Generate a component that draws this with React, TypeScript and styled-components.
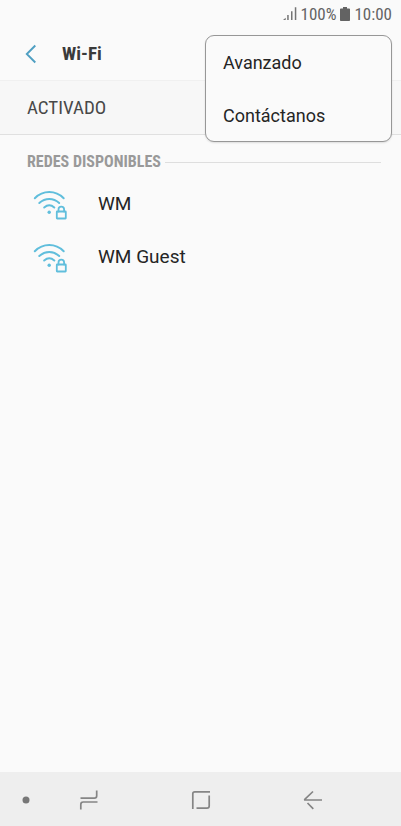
import React from "react";
import styled, { createGlobalStyle } from "styled-components";

const condensed = `"Roboto Condensed", Roboto, "Liberation Sans Narrow", sans-serif`;

const GlobalStyle = createGlobalStyle`
  * { box-sizing: border-box; }
  body { margin: 0; background: #fafafa; font-family: Roboto, sans-serif; color: #252525; }
  button { border: 0; padding: 0; background: none; font: inherit; color: inherit; text-align: left; cursor: pointer; }
  svg { display: block; flex: none; }
`;

const Screen = styled.div`
  position: relative;
  display: flex;
  flex-direction: column;
  min-height: 100vh;
`;

const StatusBar = styled.div`
  display: flex;
  align-items: center;
  justify-content: flex-end;
  gap: 4px;
  height: 28px;
  padding-right: 9px;
  font: 400 17px/28px ${condensed};
  color: #636363;
`;

const Header = styled.header`
  display: flex;
  align-items: center;
  gap: 25px;
  height: 52px;
  padding-left: 25px;
`;

const Title = styled.h1`
  margin: 0;
  font: 700 19px/24px ${condensed};
  color: #3a3a3a;
`;

const StateButton = styled.button`
  display: block;
  width: 100%;
  height: 55px;
  && {
    padding-left: 27px;
    border-top: 1px solid #f0f0f0;
    border-bottom: 1px solid #e0e0e0;
    background: #f7f7f7;
    font: 400 19px/24px ${condensed};
    color: #484848;
  }
`;

const Networks = styled.main`
  flex: 1;
  padding-top: 16px;
`;

const SectionHeading = styled.h2`
  display: flex;
  align-items: center;
  gap: 4px;
  margin: 0;
  padding: 0 20px 0 27px;
  font: 700 16px/22px ${condensed};
  color: #999;

  &::after {
    content: "";
    flex: 1;
    height: 1px;
    background: #dedede;
  }
`;

const NetworkList = styled.ul`
  list-style: none;
  margin: 0;
  padding: 6px 0 0;
`;

const NetworkButton = styled.button`
  display: flex;
  align-items: center;
  gap: 30px;
  width: 100%;
  height: 53px;
  && {
    padding-left: 33px;
    font-size: 19px;
  }
`;

const NetworkName = styled.span`
  padding-bottom: 4px;
`;

const Menu = styled.div`
  position: absolute;
  top: 35px;
  right: 9px;
  display: grid;
  gap: 1px;
  width: 187px;
  border: 1px solid #979797;
  border-radius: 9px;
  background: #fafafa;
  box-shadow: 0 1px 2px rgba(0, 0, 0, 0.12);
`;

const MenuItem = styled.button`
  height: 52px;
  && {
    padding: 1px 0 0 17px;
    font-size: 18px;
  }
`;

const NavBar = styled.nav`
  display: grid;
  grid-template-columns: 33fr 112fr 112fr 112fr 32fr;
  height: 54px;
  padding-top: 1px;
  background: #eee;
`;

const NavButton = styled.button<{ $edge?: boolean }>`
  display: flex;
  align-items: center;
  justify-content: ${({ $edge }) => ($edge ? "flex-end" : "center")};
  && {
    padding-right: ${({ $edge }) => ($edge ? "3px" : "0")};
  }
`;

const SignalIcon = () => (
  <svg width="14" height="14" viewBox="0 0 14 14" fill="#747474" aria-hidden="true">
    <path d="M0 13h2.700v-2.300zM4.200 8h1.500v5H4.200zM8 4.200h1.500V13H8zM11.800 0.300h1.500V13h-1.500z" />
  </svg>
);

const BatteryIcon = () => (
  <svg width="10" height="14" viewBox="0 0 10 14" fill="#636363" aria-hidden="true">
    <path d="M3 0h4v1.500h2.200q.8 0 .8.700v11q0 .8-.8.800H.8q-.8 0-.8-.8v-11Q0 1.500.8 1.500H3z" />
  </svg>
);

const ChevronIcon = () => (
  <svg width="12" height="20" viewBox="0 0 12 20" fill="none" stroke="#4f9fc2" strokeWidth="1.900" aria-hidden="true">
    <path d="M10.300 1.500 1.800 10l8.500 8.500" />
  </svg>
);

const SecureWifiIcon = () => (
  <svg width="35" height="31" viewBox="0 0 35 31" fill="none" stroke="#60bedc" strokeWidth="2" strokeLinecap="round" strokeLinejoin="round" aria-hidden="true">
    <path d="M1.800 8.300C10 0 22.500 0 30.700 8.300M6.300 13c5.900-5.300 14-5.300 19.900 0M11.200 17.500c3.100-2.700 7-2.700 10.100 0" />
    <circle cx="16.200" cy="22.300" r="1.700" fill="#60bedc" stroke="none" />
    <rect x="23.800" y="21.500" width="9" height="7" rx=".4" strokeWidth="1.800" />
    <path d="M25.500 21.500v-2c0-3.800 5.600-3.800 5.600 0v2" strokeWidth="1.800" />
  </svg>
);

const lineProps = { fill: "none", stroke: "#858585", strokeWidth: 1.7, "aria-hidden": true } as const;

const RecentsIcon = () => (
  <svg width="20" height="22" viewBox="0 0 20 22" {...lineProps}>
    <path d="M1.500 9.200h13.800q2.400 0 2.400-2.400V1.500M18.500 13H4.200q-2.400 0-2.400 2.400v5.100" />
  </svg>
);

const HomeIcon = () => (
  <svg width="20" height="20" viewBox="0 0 20 20" {...lineProps}>
    <path d="M19 1.800H3.800q-2 0-2 2V19M5.500 18.200H16q2.200 0 2.200-2.200V5.500" />
  </svg>
);

const BackIcon = () => (
  <svg width="20" height="20" viewBox="0 0 20 20" {...lineProps}>
    <path d="M10 1.500 2 9.200q-.8.800.2.800H19M4.500 13l5.800 5.800" />
  </svg>
);

const networks = ["WM", "WM Guest"];
const menuItems = ["Avanzado", "Contáctanos"];

export default function App() {
  return (
    <>
      <GlobalStyle />
      <Screen>
        <StatusBar>
          <SignalIcon />
          <span>100%</span>
          <BatteryIcon />
          <time>10:00</time>
        </StatusBar>
        <Header>
          <button type="button" aria-label="Atrás">
            <ChevronIcon />
          </button>
          <Title>Wi-Fi</Title>
        </Header>
        <StateButton type="button">ACTIVADO</StateButton>
        <Networks>
          <SectionHeading>REDES DISPONIBLES</SectionHeading>
          <NetworkList>
            {networks.map((name) => (
              <li key={name}>
                <NetworkButton type="button">
                  <SecureWifiIcon />
                  <NetworkName>{name}</NetworkName>
                </NetworkButton>
              </li>
            ))}
          </NetworkList>
        </Networks>
        <Menu role="menu">
          {menuItems.map((item) => (
            <MenuItem key={item} type="button" role="menuitem">
              {item}
            </MenuItem>
          ))}
        </Menu>
        <NavBar>
          <NavButton type="button" $edge aria-label="Mostrar u ocultar">
            <svg width="8" height="8" viewBox="0 0 8 8" fill="#777" aria-hidden="true">
              <circle cx="4" cy="4" r="3.500" />
            </svg>
          </NavButton>
          <NavButton type="button" aria-label="Recientes">
            <RecentsIcon />
          </NavButton>
          <NavButton type="button" aria-label="Inicio">
            <HomeIcon />
          </NavButton>
          <NavButton type="button" aria-label="Volver">
            <BackIcon />
          </NavButton>
        </NavBar>
      </Screen>
    </>
  );
}
